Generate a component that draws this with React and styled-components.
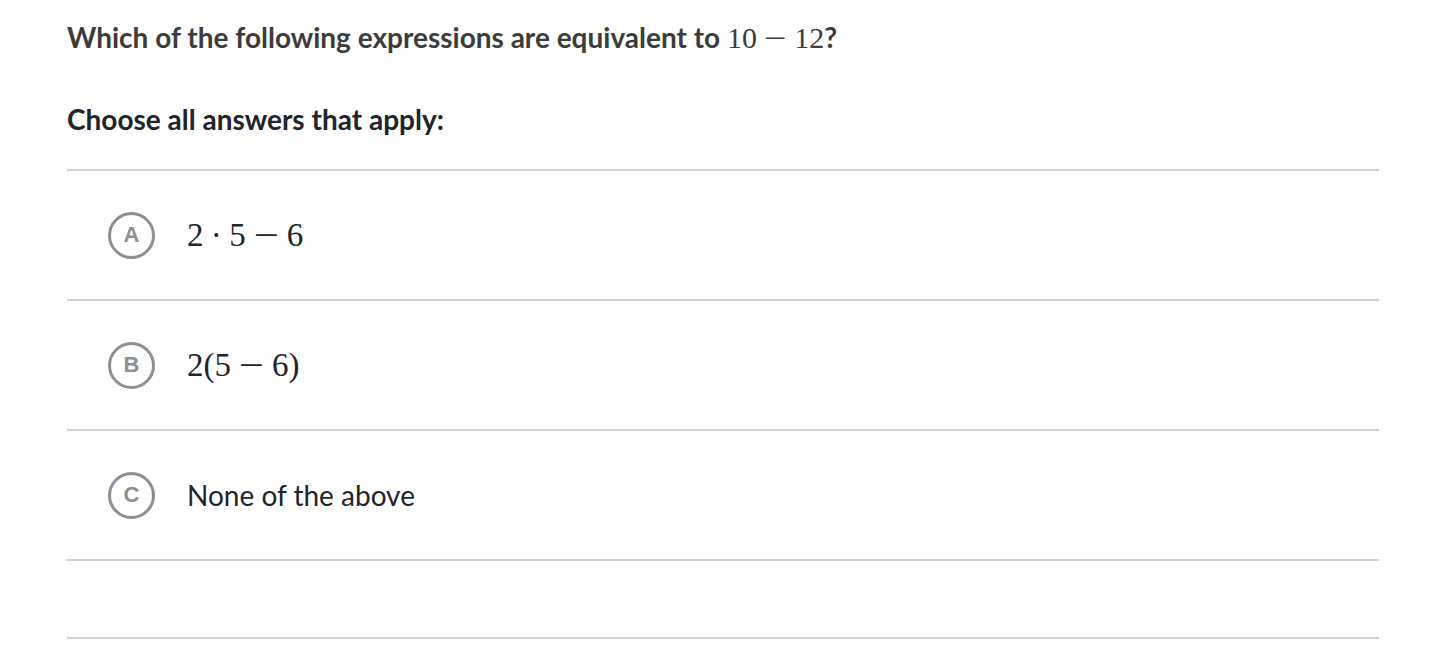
import React from "react";
import styled, { createGlobalStyle } from "styled-components";

const Global = createGlobalStyle`
  html, body { margin: 0; padding: 0; background: #fff; }
  body { font-family: Lato, "Noto Sans", sans-serif; }
`;

const Page = styled.div`
  padding: 19px 59px 0 67px;
`;

const Question = styled.div`
  font-size: 28px;
  line-height: 36px;
  font-weight: 700;
  color: #3c3c3c;
`;

const Math = styled.span`
  font-family: "Liberation Serif", "DejaVu Serif", serif;
  font-weight: 400;
  font-size: ${(p) => p.$size || 30}px;
  color: ${(p) => p.$color || "inherit"};
  white-space: nowrap;
`;

const Op = styled.span`
  display: inline-block;
  margin: 0 ${(p) => (p.$wide ? "0.34em" : "0.222em")};
  transform: ${(p) => (p.$wide ? "scaleX(1.35)" : "none")};
`;

const Prompt = styled.div`
  margin-top: 45px;
  font-size: 28px;
  line-height: 36px;
  font-weight: 700;
  color: #21242c;
`;

const List = styled.div`
  margin-top: 32px;
  border-top: 2px solid #d0d0d0;
`;

const Row = styled.div`
  display: flex;
  align-items: center;
  gap: 32px;
  height: ${(p) => p.$h || 128}px;
  padding-left: 41px;
  border-bottom: 2px solid #d0d0d0;
`;

const Bubble = styled.div`
  width: 41px;
  height: 41px;
  border: 3px solid #8f8f92;
  border-radius: 50%;
  display: flex;
  align-items: center;
  justify-content: center;
  font-family: "Liberation Sans", Arial, sans-serif;
  font-weight: 700;
  font-size: 22px;
  color: #8f8f92;
  flex-shrink: 0;
`;

const Label = styled.div`
  font-size: 28px;
  color: #21242c;
  font-weight: 400;
`;

const Minus = () => <Op $wide>−</Op>;

const answers = [
  {
    letter: "A",
    math: (
      <>
        2<Op>·</Op>5<Minus />6
      </>
    ),
  },
  {
    letter: "B",
    math: (
      <>
        2(5<Minus />6)
      </>
    ),
  },
  { letter: "C", text: "None of the above" },
];

export default function App() {
  return (
    <>
      <Global />
      <Page>
        <Question>
          Which of the following expressions are equivalent to{" "}
          <Math $size={30} $color="#3c3c3c">
            10<Minus />12
          </Math>
          ?
        </Question>
        <Prompt>Choose all answers that apply:</Prompt>
        <List>
          {answers.map((a) => (
            <Row key={a.letter}>
              <Bubble>{a.letter}</Bubble>
              {a.math ? (
                <Math $size={33} $color="#21242c">{a.math}</Math>
              ) : (
                <Label>{a.text}</Label>
              )}
            </Row>
          ))}
          <Row $h={76} />
        </List>
      </Page>
    </>
  );
}
